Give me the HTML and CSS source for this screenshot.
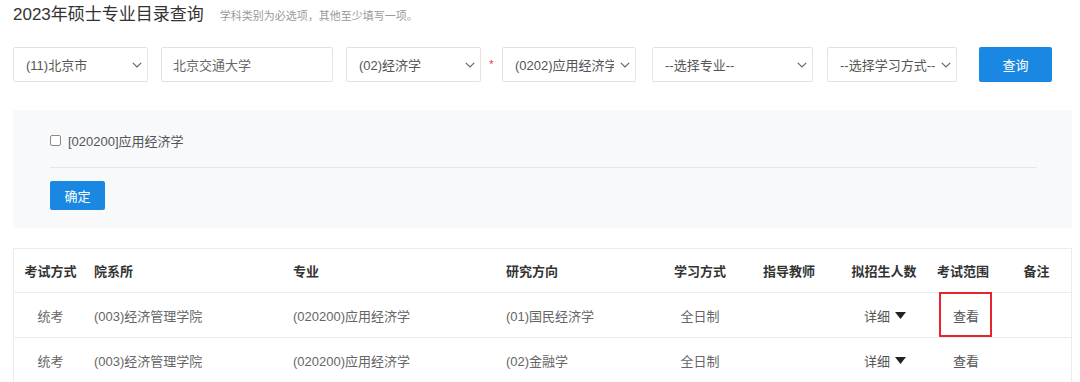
FILE: index.html
```html
<!DOCTYPE html>
<html lang="zh-CN">
<head>
<meta charset="utf-8">
<title>2023年硕士专业目录查询</title>
<link rel="stylesheet" href="styles.css">
</head>
<body>
<div class="page">
  <div class="title-row">
    <h1 class="title">2023年硕士专业目录查询</h1>
    <span class="hint">学科类别为必选项，其他至少填写一项。</span>
  </div>

  <div class="controls">
    <div class="select w-prov"><span class="sel-text">(11)北京市</span><svg class="chev" width="10" height="6" viewBox="0 0 10 6"><polyline points="0.8,0.8 5,5 9.2,0.8" fill="none" stroke="#666" stroke-width="1.2"/></svg></div>
    <div class="input w-school">北京交通大学</div>
    <div class="select w-cat"><span class="sel-text">(02)经济学</span><svg class="chev" width="10" height="6" viewBox="0 0 10 6"><polyline points="0.8,0.8 5,5 9.2,0.8" fill="none" stroke="#666" stroke-width="1.2"/></svg></div>
    <span class="req">*</span>
    <div class="select w-sub"><span class="sel-text">(0202)应用经济学</span><svg class="chev" width="10" height="6" viewBox="0 0 10 6"><polyline points="0.8,0.8 5,5 9.2,0.8" fill="none" stroke="#666" stroke-width="1.2"/></svg></div>
    <div class="select w-major"><span class="sel-text">--选择专业--</span><svg class="chev" width="10" height="6" viewBox="0 0 10 6"><polyline points="0.8,0.8 5,5 9.2,0.8" fill="none" stroke="#666" stroke-width="1.2"/></svg></div>
    <div class="select w-mode"><span class="sel-text">--选择学习方式--</span><svg class="chev" width="10" height="6" viewBox="0 0 10 6"><polyline points="0.8,0.8 5,5 9.2,0.8" fill="none" stroke="#666" stroke-width="1.2"/></svg></div>
    <button class="btn btn-query">查询</button>
  </div>

  <div class="panel">
    <div class="check-row">
      <span class="checkbox"></span>
      <span class="check-label">[020200]应用经济学</span>
    </div>
    <div class="panel-actions">
      <button class="btn btn-ok">确定</button>
    </div>
  </div>

  <div class="table">
    <div class="tr th">
      <div class="c center">考试方式</div>
      <div class="c left">院系所</div>
      <div class="c left">专业</div>
      <div class="c left">研究方向</div>
      <div class="c center">学习方式</div>
      <div class="c center">指导教师</div>
      <div class="c center">拟招生人数</div>
      <div class="c center">考试范围</div>
      <div class="c center last">备注</div>
    </div>
    <div class="tr td">
      <div class="c center">统考</div>
      <div class="c left">(003)经济管理学院</div>
      <div class="c left">(020200)应用经济学</div>
      <div class="c left">(01)国民经济学</div>
      <div class="c center">全日制</div>
      <div class="c center"></div>
      <div class="c center"><span class="detail">详细<svg class="caret" width="11" height="7" viewBox="0 0 11 7"><polygon points="0,0 11,0 5.5,7" fill="#222"/></svg></span></div>
      <div class="c center scope">查看<span class="mark"></span></div>
      <div class="c center last"></div>
    </div>
    <div class="tr td">
      <div class="c center">统考</div>
      <div class="c left">(003)经济管理学院</div>
      <div class="c left">(020200)应用经济学</div>
      <div class="c left">(02)金融学</div>
      <div class="c center">全日制</div>
      <div class="c center"></div>
      <div class="c center"><span class="detail">详细<svg class="caret" width="11" height="7" viewBox="0 0 11 7"><polygon points="0,0 11,0 5.5,7" fill="#222"/></svg></span></div>
      <div class="c center scope">查看</div>
      <div class="c center last"></div>
    </div>
  </div>
</div>
</body>
</html>
```

FILE: styles.css
```css
* { box-sizing: border-box; }
html, body { margin: 0; padding: 0; background: #fff; }
body {
  font-family: "Liberation Sans", "Noto Sans CJK SC", sans-serif;
  color: #555;
  font-size: 13px;
}
.page {
  margin-left: 13px;
  width: 1059px;
}
.title-row {
  display: flex;
  align-items: baseline;
  padding-top: 3px;
  height: 27px;
}
.title {
  margin: 0;
  font-size: 17px;
  font-weight: normal;
  line-height: 24px;
  color: #333;
}
.hint {
  margin-left: 16px;
  font-size: 11px;
  color: #999;
}
.controls {
  display: flex;
  align-items: center;
  margin-top: 20px;
  height: 35px;
}
.select, .input {
  height: 35px;
  border: 1px solid #e2e2e2;
  border-radius: 2px;
  background: #fff;
  display: flex;
  align-items: center;
  color: #555;
  font-size: 13px;
}
.select {
  padding: 0 5px 0 12px;
}
.sel-text {
  flex: 1;
  min-width: 0;
  white-space: nowrap;
  overflow: hidden;
}
.chev { flex: none; margin-left: 6px; }
.input { padding-left: 11px; color: #666; }
.w-prov { width: 135px; }
.w-school { width: 172px; margin-left: 13px; }
.w-cat { width: 135px; margin-left: 13px; }
.req {
  width: 21px;
  text-align: center;
  color: #e33;
  font-size: 11px;
  padding-bottom: 2px;
}
.w-sub { width: 134px; }
.w-major { width: 161px; margin-left: 16px; }
.w-mode { width: 130px; margin-left: 14px; }
.btn {
  border: none;
  background: #1a88e2;
  color: #fff;
  font-family: inherit;
  border-radius: 2px;
  font-size: 13px;
  padding: 0;
}
.btn-query {
  width: 73px;
  height: 35px;
  margin-left: 22px;
}
.panel {
  margin-top: 28px;
  background: #f8f9fb;
  padding: 0 35px 18px 37px;
}
.check-row {
  display: flex;
  align-items: center;
  height: 58px;
  padding-top: 3px;
  border-bottom: 1px solid #e6e7e9;
}
.checkbox {
  width: 11px;
  height: 11px;
  border: 1px solid #8a8a8a;
  border-radius: 2px;
  background: #fff;
  margin-right: 7px;
}
.check-label { color: #555; }
.panel-actions { padding-top: 13px; }
.btn-ok {
  width: 55px;
  height: 29px;
}
.table {
  margin-top: 20px;
  border: 1px solid #ececec;
  border-bottom: none;
}
.tr {
  display: grid;
  grid-template-columns: 73px 199px 213px 157px 88px 90px 100px 58px 79px;
  border-bottom: 1px solid #ececec;
}
.th { height: 44px; color: #333; font-weight: bold; }
.td { height: 45px; color: #666; }
.c {
  display: flex;
  align-items: center;
  white-space: nowrap;
}
.center { justify-content: center; }
.left { padding-left: 7px; }
.last { padding-left: 10px; }
.detail {
  display: inline-flex;
  align-items: center;
  gap: 5px;
  color: #555;
  padding-left: 2px;
}
.scope { position: relative; color: #555; padding-left: 6px; }
.mark {
  position: absolute;
  left: 5px;
  right: 0;
  top: -1px;
  bottom: 0;
  border: 2px solid #e5242b;
}
```
